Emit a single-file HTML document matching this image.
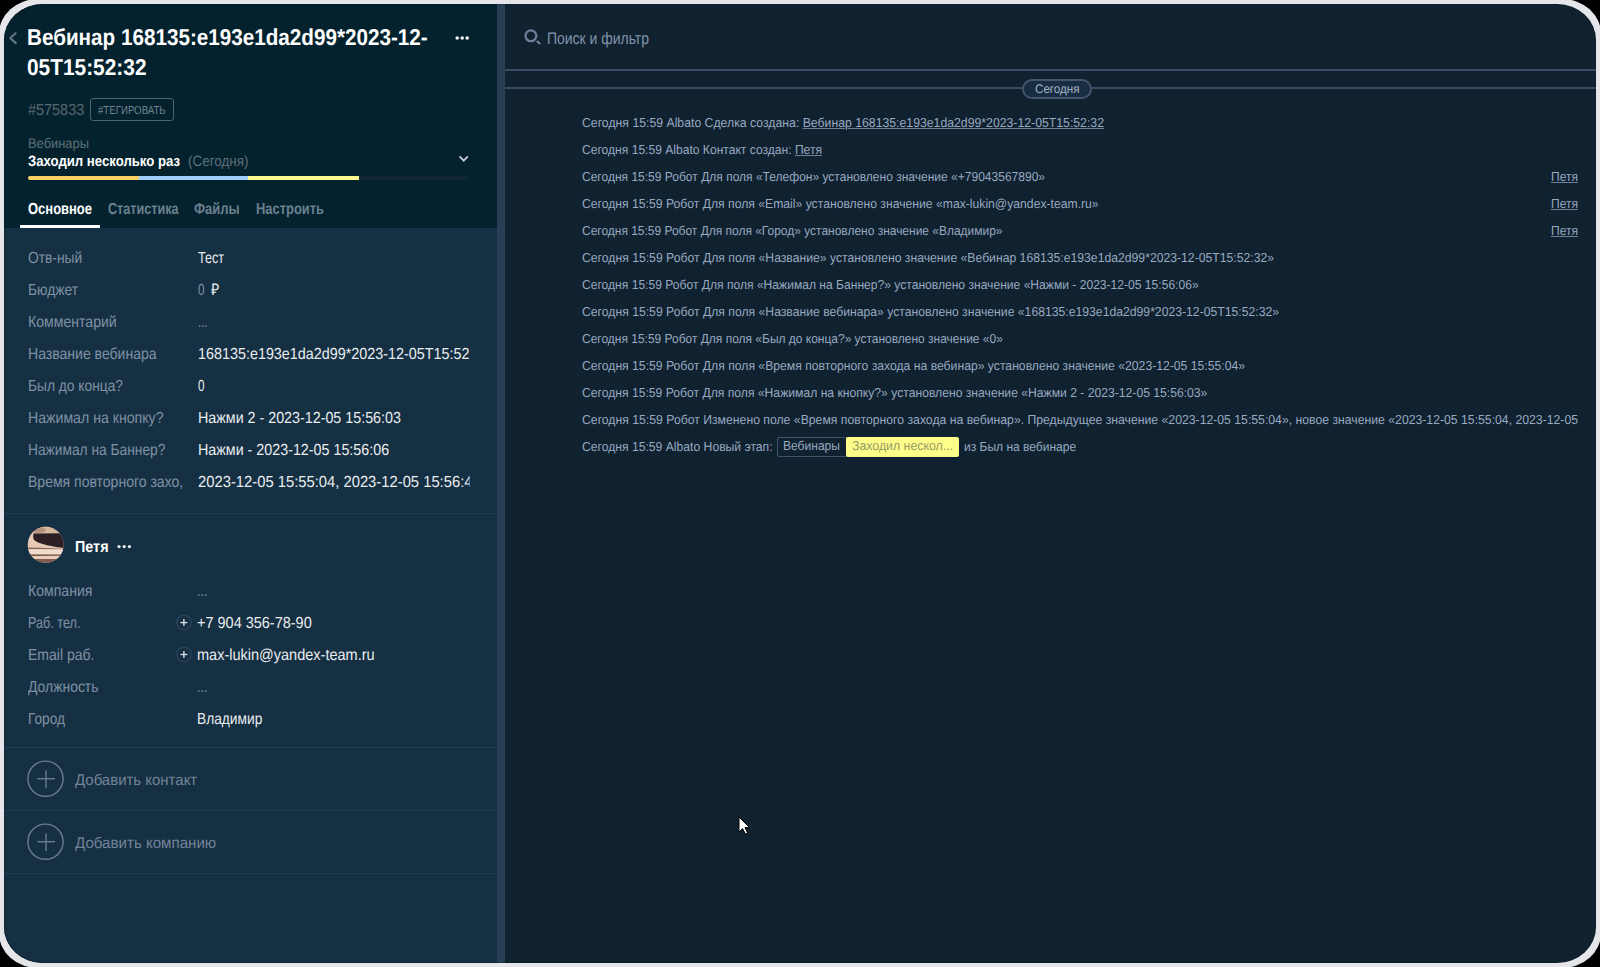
<!DOCTYPE html>
<html><head><meta charset="utf-8">
<style>
html,body{margin:0;padding:0;width:1600px;height:967px;overflow:hidden;background:#000;}
body{position:relative;font-family:"Liberation Sans",sans-serif;text-rendering:geometricPrecision;}
.frame{position:absolute;left:-1px;top:-1px;width:1602px;height:969px;border-radius:39px / 35px;background:#e5e6ea;}
.inner{position:absolute;left:4px;top:4px;width:1592px;height:959px;border-radius:39px / 36px;overflow:hidden;background:#102130;}
.hdr{position:absolute;left:0;top:0;width:493px;height:224px;background:#03222e;}
.lbody{position:absolute;left:0;top:224px;width:493px;height:735px;background:#163043;}
.divd{position:absolute;left:493px;top:0;width:8px;height:959px;background:#263f55;}
.sep{position:absolute;left:0;width:493px;height:1px;background:#223b52;}
.hl{position:absolute;left:501px;width:1091px;height:2px;background:#3c4a63;}
.t{position:absolute;white-space:pre;transform-origin:0 0;}
.f{font-size:13px;line-height:20px;color:#98aac0;}
.f u{text-decoration:underline;text-underline-offset:0.5px;text-decoration-color:#6f8098;}
</style></head><body>
<div class="frame"></div>
<div class="inner">
 <div class="hdr"></div>
 <div class="lbody"></div>
 <div class="divd"></div>
 <div class="sep" style="top:509px"></div>
 <div class="sep" style="top:743px"></div>
 <div class="sep" style="top:806px"></div>
 <div class="sep" style="top:869px"></div>
 <div class="hl" style="top:65px"></div>
 <div class="hl" style="top:83px"></div>
</div>
<div style="position:absolute;left:4px;top:4px;width:1592px;height:959px;border-radius:39px / 36px;box-shadow:inset 0 0 0 1px rgba(0,8,16,.2)"></div>
<!-- progress bar -->
<div style="position:absolute;left:28px;top:176px;width:441px;height:4px;border-radius:2px;background:#112834;overflow:hidden">
 <div style="position:absolute;left:0;top:0;width:111px;height:4px;background:#fbd065"></div>
 <div style="position:absolute;left:111px;top:0;width:109px;height:4px;background:#9dd0fa"></div>
 <div style="position:absolute;left:220px;top:0;width:111px;height:4px;background:#fcf98e"></div>
</div>
<!-- tab underline -->
<div style="position:absolute;left:20px;top:225px;width:80px;height:3px;background:#fff"></div>
<!-- tag box -->
<div style="position:absolute;left:89.5px;top:98px;width:82px;height:21px;border:1.2px solid #4f6470;border-radius:3px"></div>
<!-- pill -->
<div style="position:absolute;left:1022px;top:79px;width:66px;height:16px;border:2px solid #46546d;border-radius:10px;background:#162d42"></div>
<!-- stage boxes -->
<div style="position:absolute;left:777px;top:436.5px;width:69px;height:18px;border:1.3px solid #435167;border-radius:2px"></div>
<div style="position:absolute;left:846px;top:436.5px;width:113px;height:20px;border-radius:2px;background:#fffd8a"></div>
<!-- icons -->
<svg style="position:absolute;left:0;top:0" width="1600" height="967" viewBox="0 0 1600 967">
 <defs><clipPath id="av"><circle cx="45.65" cy="544.85" r="18"/></clipPath></defs>
 <polyline points="15.6,33.2 10.3,38.1 15.8,43.1" fill="none" stroke="#627580" stroke-width="2.1" stroke-linecap="round" stroke-linejoin="round"/>
 <g fill="#f2f4f6"><circle cx="457.2" cy="38" r="1.8"/><circle cx="462.2" cy="38" r="1.8"/><circle cx="467.2" cy="38" r="1.8"/></g>
 <polyline points="459.6,156.4 463.7,160.6 467.8,156.4" fill="none" stroke="#c3ccd2" stroke-width="1.9"/>
 <circle cx="530.9" cy="35.8" r="5.4" fill="none" stroke="#6f7f98" stroke-width="2.3"/>
 <line x1="537.5" y1="41.6" x2="539.6" y2="43.5" stroke="#6f7f98" stroke-width="2.2" stroke-linecap="round"/>
 <g clip-path="url(#av)">
  <rect x="27" y="526" width="38" height="38" fill="#e6c9b4"/>
  <rect x="27" y="526" width="38" height="7.5" fill="#d8b79f"/>
  <ellipse cx="38" cy="530" rx="8" ry="3" fill="#9c7a68" opacity="0.6"/>
  <path d="M33.5,533.6 L60,533.2 L64,536 L64,548 L56,547 L46,545 L38,542.5 L34,540 Q32.6,537 33.5,533.6 Z" fill="#2b1f24"/>
  <rect x="27" y="542" width="38" height="6" fill="#edd4c1" opacity="0"/>
  <path d="M27,547.6 L48,548 L60,548.8 L65,548.6 L65,549.4 L27,549.2 Z" fill="#86665a"/>
  <rect x="27" y="549.3" width="38" height="5" fill="#f1dbca"/>
  <path d="M30,554.6 L62,554.4 L62,555.8 L30,556 Z" fill="#6e5046"/>
  <rect x="27" y="556" width="38" height="3" fill="#e9cfbb"/>
  <rect x="27" y="559" width="38" height="5" fill="#7f5c4e"/>
 </g>
 <g fill="#f2f4f6"><circle cx="119" cy="546.6" r="1.6"/><circle cx="124.2" cy="546.6" r="1.6"/><circle cx="129.4" cy="546.6" r="1.6"/></g>
 <g stroke="#2c4459" stroke-width="1.2" fill="none"><circle cx="183.9" cy="622.6" r="7.2"/><circle cx="183.9" cy="654.5" r="7.2"/></g>
 <g stroke="#dfe4e8" stroke-width="1.3"><line x1="180.4" y1="622.6" x2="187.4" y2="622.6"/><line x1="183.9" y1="619.1" x2="183.9" y2="626.1"/>
  <line x1="180.4" y1="654.5" x2="187.4" y2="654.5"/><line x1="183.9" y1="651" x2="183.9" y2="658"/></g>
 <g stroke="#6a7d92" stroke-width="1.4" fill="none"><circle cx="45.5" cy="778.7" r="17.6"/><circle cx="45.5" cy="841.7" r="17.6"/>
  <line x1="37.5" y1="778.7" x2="55" y2="778.7"/><line x1="46" y1="770.5" x2="46" y2="788"/>
  <line x1="37.5" y1="841.7" x2="55" y2="841.7"/><line x1="46" y1="833.5" x2="46" y2="851"/></g>
 <path d="M739,817 L739,832 L742.6,828.6 L745.3,834 L747.6,833 L745,827.6 L749.6,827.6 Z" fill="#fff" stroke="#000" stroke-width="1" stroke-linejoin="round"/>
</svg>
<div class="t" style="left:26.5px;top:22.0px;font-size:23px;font-weight:700;color:#ffffff;line-height:30px;transform:scaleX(0.8984)">Вебинар 168135:e193e1da2d99*2023-12-</div>
<div class="t" style="left:26.5px;top:52.0px;font-size:23px;font-weight:700;color:#ffffff;line-height:30px;transform:scaleX(0.9073)">05T15:52:32</div>
<div class="t" style="left:28.0px;top:101.0px;font-size:16px;font-weight:400;color:#58676f;line-height:20px;transform:scaleX(0.9021)">#575833</div>
<div class="t" style="left:98.0px;top:101.0px;font-size:11.6px;font-weight:400;color:#70838f;line-height:20px;transform:scaleX(0.8332)">#ТЕГИРОВАТЬ</div>
<div class="t" style="left:28.0px;top:133.0px;font-size:14px;font-weight:400;color:#5f6f79;line-height:20px;transform:scaleX(0.9218)">Вебинары</div>
<div class="t" style="left:28.0px;top:152.0px;font-size:15px;font-weight:700;color:#ffffff;line-height:20px;transform:scaleX(0.8771)">Заходил несколько раз</div>
<div class="t" style="left:188.2px;top:152.0px;font-size:15px;font-weight:400;color:#5f6f79;line-height:20px;transform:scaleX(0.8950)">(Сегодня)</div>
<div class="t" style="left:27.5px;top:200.0px;font-size:16px;font-weight:700;color:#ffffff;line-height:20px;transform:scaleX(0.8106)">Основное</div>
<div class="t" style="left:107.8px;top:200.0px;font-size:16px;font-weight:700;color:#6a808e;line-height:20px;transform:scaleX(0.7894)">Статистика</div>
<div class="t" style="left:194.4px;top:200.0px;font-size:16px;font-weight:700;color:#6a808e;line-height:20px;transform:scaleX(0.8111)">Файлы</div>
<div class="t" style="left:256.0px;top:200.0px;font-size:16px;font-weight:700;color:#6a808e;line-height:20px;transform:scaleX(0.8071)">Настроить</div>
<div class="t" style="left:28.0px;top:249.0px;font-size:16px;font-weight:400;color:#7f91a5;line-height:20px;transform:scaleX(0.8620)">Отв-ный</div>
<div class="t" style="left:28.0px;top:281.0px;font-size:16px;font-weight:400;color:#7f91a5;line-height:20px;transform:scaleX(0.8637)">Бюджет</div>
<div class="t" style="left:28.0px;top:313.0px;font-size:16px;font-weight:400;color:#7f91a5;line-height:20px;transform:scaleX(0.8801)">Комментарий</div>
<div class="t" style="left:28.0px;top:345.0px;font-size:16px;font-weight:400;color:#7f91a5;line-height:20px;transform:scaleX(0.8771)">Название вебинара</div>
<div class="t" style="left:28.0px;top:377.0px;font-size:16px;font-weight:400;color:#7f91a5;line-height:20px;transform:scaleX(0.8609)">Был до конца?</div>
<div class="t" style="left:28.0px;top:409.0px;font-size:16px;font-weight:400;color:#7f91a5;line-height:20px;transform:scaleX(0.8831)">Нажимал на кнопку?</div>
<div class="t" style="left:28.0px;top:441.0px;font-size:16px;font-weight:400;color:#7f91a5;line-height:20px;transform:scaleX(0.8603)">Нажимал на Баннер?</div>
<div class="t" style="left:28.0px;top:473.0px;font-size:16px;font-weight:400;color:#7f91a5;line-height:20px;transform:scaleX(0.8758)">Время повторного захо,</div>
<div class="t" style="left:197.5px;top:249.0px;font-size:16px;font-weight:400;color:#e9edf0;line-height:20px;transform:scaleX(0.7883)">Тест</div>
<div class="t" style="left:197.5px;top:313.0px;font-size:16px;font-weight:400;color:#7f91a5;line-height:20px;transform:scaleX(0.7119)">...</div>
<div class="t" style="left:197.5px;top:345.0px;font-size:16px;font-weight:400;color:#e9edf0;line-height:20px;transform:scaleX(0.8975);width:302.5px;overflow:hidden">168135:e193e1da2d99*2023-12-05T15:52</div>
<div class="t" style="left:197.5px;top:377.0px;font-size:16px;font-weight:400;color:#e9edf0;line-height:20px;transform:scaleX(0.7298)">0</div>
<div class="t" style="left:197.5px;top:409.0px;font-size:16px;font-weight:400;color:#e9edf0;line-height:20px;transform:scaleX(0.8929)">Нажми 2 - 2023-12-05 15:56:03</div>
<div class="t" style="left:197.5px;top:441.0px;font-size:16px;font-weight:400;color:#e9edf0;line-height:20px;transform:scaleX(0.8934)">Нажми - 2023-12-05 15:56:06</div>
<div class="t" style="left:197.5px;top:473.0px;font-size:16px;font-weight:400;color:#e9edf0;line-height:20px;transform:scaleX(0.9238);width:293.9px;overflow:hidden">2023-12-05 15:55:04, 2023-12-05 15:56:4</div>
<div class="t" style="left:197.5px;top:281.0px;font-size:16px;font-weight:400;color:#7f91a5;line-height:20px;transform:scaleX(0.7298)">0</div>
<div class="t" style="left:210.5px;top:281.0px;font-size:16px;font-weight:400;color:#e9edf0;line-height:20px;transform:scaleX(0.8805)">₽</div>
<div class="t" style="left:74.5px;top:538.0px;font-size:16px;font-weight:700;color:#ffffff;line-height:20px;transform:scaleX(0.8967)">Петя</div>
<div class="t" style="left:28.0px;top:582.0px;font-size:16px;font-weight:400;color:#7f91a5;line-height:20px;transform:scaleX(0.8796)">Компания</div>
<div class="t" style="left:28.0px;top:614.0px;font-size:16px;font-weight:400;color:#7f91a5;line-height:20px;transform:scaleX(0.7908)">Раб. тел.</div>
<div class="t" style="left:28.0px;top:646.0px;font-size:16px;font-weight:400;color:#7f91a5;line-height:20px;transform:scaleX(0.8766)">Email раб.</div>
<div class="t" style="left:28.0px;top:678.0px;font-size:16px;font-weight:400;color:#7f91a5;line-height:20px;transform:scaleX(0.8704)">Должность</div>
<div class="t" style="left:28.0px;top:710.0px;font-size:16px;font-weight:400;color:#7f91a5;line-height:20px;transform:scaleX(0.8549)">Город</div>
<div class="t" style="left:197.0px;top:582.0px;font-size:16px;font-weight:400;color:#7f91a5;line-height:20px;transform:scaleX(0.7944)">...</div>
<div class="t" style="left:197.0px;top:614.0px;font-size:16px;font-weight:400;color:#e9edf0;line-height:20px;transform:scaleX(0.9047)">+7 904 356-78-90</div>
<div class="t" style="left:197.0px;top:646.0px;font-size:16px;font-weight:400;color:#e9edf0;line-height:20px;transform:scaleX(0.9067)">max-lukin@yandex-team.ru</div>
<div class="t" style="left:197.0px;top:678.0px;font-size:16px;font-weight:400;color:#7f91a5;line-height:20px;transform:scaleX(0.7944)">...</div>
<div class="t" style="left:197.0px;top:710.0px;font-size:16px;font-weight:400;color:#e9edf0;line-height:20px;transform:scaleX(0.8590)">Владимир</div>
<div class="t" style="left:74.8px;top:771.0px;font-size:15.5px;font-weight:400;color:#72839a;line-height:20px;transform:scaleX(0.9657)">Добавить контакт</div>
<div class="t" style="left:74.8px;top:834.0px;font-size:15.5px;font-weight:400;color:#72839a;line-height:20px;transform:scaleX(0.9744)">Добавить компанию</div>
<div class="t" style="left:547.0px;top:29.0px;font-size:16.7px;font-weight:400;color:#8294ab;line-height:20px;transform:scaleX(0.8365)">Поиск и фильтр</div>
<div class="t" style="left:1034.5px;top:79.0px;font-size:12.5px;font-weight:400;color:#a8b7c8;line-height:20px;transform:scaleX(0.9286)">Сегодня</div>
<div class="t f" style="left:582.0px;top:113.0px;transform:scaleX(0.9428)">Сегодня 15:59 Albato Сделка создана: <u>Вебинар 168135:e193e1da2d99*2023-12-05T15:52:32</u></div>
<div class="t f" style="left:582.0px;top:140.0px;transform:scaleX(0.9294)">Сегодня 15:59 Albato Контакт создан: <u>Петя</u></div>
<div class="t f" style="left:582.0px;top:167.0px;transform:scaleX(0.9245)">Сегодня 15:59 Робот Для поля «Телефон» установлено значение «+79043567890»</div>
<div class="t f" style="left:582.0px;top:194.0px;transform:scaleX(0.9369)">Сегодня 15:59 Робот Для поля «Email» установлено значение «max-lukin@yandex-team.ru»</div>
<div class="t f" style="left:582.0px;top:221.0px;transform:scaleX(0.9207)">Сегодня 15:59 Робот Для поля «Город» установлено значение «Владимир»</div>
<div class="t f" style="left:582.0px;top:248.0px;transform:scaleX(0.9384)">Сегодня 15:59 Робот Для поля «Название» установлено значение «Вебинар 168135:e193e1da2d99*2023-12-05T15:52:32»</div>
<div class="t f" style="left:582.0px;top:275.0px;transform:scaleX(0.9296)">Сегодня 15:59 Робот Для поля «Нажимал на Баннер?» установлено значение «Нажми - 2023-12-05 15:56:06»</div>
<div class="t f" style="left:582.0px;top:302.0px;transform:scaleX(0.9384)">Сегодня 15:59 Робот Для поля «Название вебинара» установлено значение «168135:e193e1da2d99*2023-12-05T15:52:32»</div>
<div class="t f" style="left:582.0px;top:329.0px;transform:scaleX(0.9215)">Сегодня 15:59 Робот Для поля «Был до конца?» установлено значение «0»</div>
<div class="t f" style="left:582.0px;top:356.0px;transform:scaleX(0.9375)">Сегодня 15:59 Робот Для поля «Время повторного захода на вебинар» установлено значение «2023-12-05 15:55:04»</div>
<div class="t f" style="left:582.0px;top:383.0px;transform:scaleX(0.9347)">Сегодня 15:59 Робот Для поля «Нажимал на кнопку?» установлено значение «Нажми 2 - 2023-12-05 15:56:03»</div>
<div class="t f" style="left:582.0px;top:410.0px;transform:scaleX(0.9407)">Сегодня 15:59 Робот Изменено поле «Время повторного захода на вебинар». Предыдущее значение «2023-12-05 15:55:04», новое значение «2023-12-05 15:55:04, 2023-12-05</div>
<div class="t f" style="left:582.0px;top:437.0px;transform:scaleX(0.9350)">Сегодня 15:59 Albato Новый этап:</div>
<div class="t f" style="left:964.3px;top:437.0px;transform:scaleX(0.9237)">из Был на вебинаре</div>
<div class="t f" style="left:783.0px;top:436.0px;transform:scaleX(0.9275)">Вебинары</div>
<div class="t f" style="left:852.0px;top:436.0px;transform:scaleX(0.9479)"><span style="color:#949a66">Заходил нескол...</span></div>
<div class="t f" style="left:1551.0px;top:167.0px;transform:scaleX(0.9265)"><u>Петя</u></div>
<div class="t f" style="left:1551.0px;top:194.0px;transform:scaleX(0.9265)"><u>Петя</u></div>
<div class="t f" style="left:1551.0px;top:221.0px;transform:scaleX(0.9265)"><u>Петя</u></div>
</body></html>
